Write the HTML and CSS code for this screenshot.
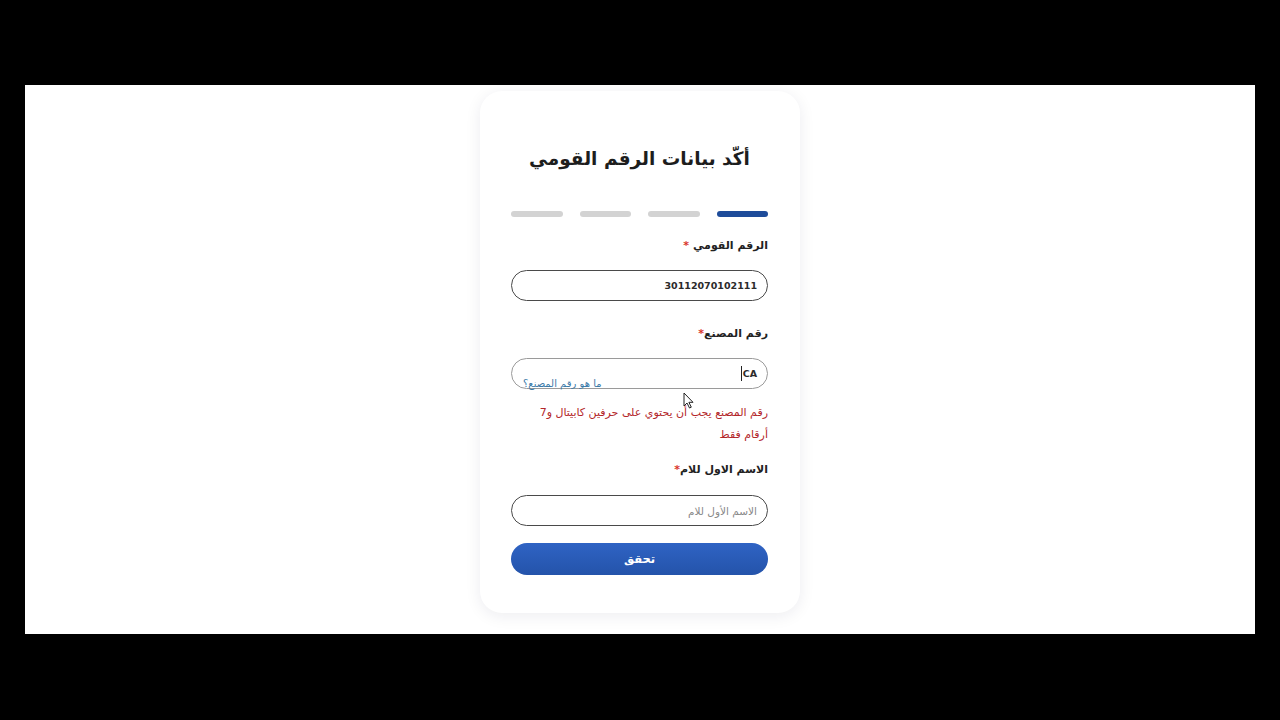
FILE: index.html
```html
<!DOCTYPE html>
<html lang="ar">
<head>
<meta charset="utf-8">
<link rel="stylesheet" href="styles.css">
</head>
<body>
<div class="stage">
  <div class="card" dir="rtl">
    <h1 class="title">أكّد بيانات الرقم القومي</h1>
    <div class="steps">
      <span class="step active"></span>
      <span class="step"></span>
      <span class="step"></span>
      <span class="step"></span>
    </div>

    <label class="label l1">الرقم القومي <span class="req">*</span></label>
    <div class="field f1"><span class="value">30112070102111</span></div>

    <label class="label l2">رقم المصنع<span class="req">*</span></label>
    <div class="field f2">
      <span class="value"><span class="caret"></span>CA</span>
      <span class="hint">ما هو رقم المصنع؟</span>
    </div>
    <p class="error">رقم المصنع يجب أن يحتوي على حرفين كابيتال و7<br>أرقام فقط</p>

    <label class="label l3">الاسم الاول للام<span class="req">*</span></label>
    <div class="field f3"><span class="placeholder">الاسم الأول للام</span></div>

    <button class="submit">تحقق</button>

    <svg class="cursor" width="11" height="17" viewBox="0 0 11 17"><path d="M1 1 L1 14 L4 11 L6.5 16 L8.3 15.2 L5.9 10.3 L10 10.3 Z" fill="#fff" stroke="#222" stroke-width="1" stroke-linejoin="round"/></svg>
  </div>
</div>
</body>
</html>
```

FILE: styles.css
```css
html, body {
  margin: 0;
  padding: 0;
  background: #000;
  height: 720px;
  overflow: hidden;
}
.stage {
  margin: 85px 25px 0;
  height: 549px;
  background: #fff;
  display: flex;
  justify-content: center;
  align-items: flex-start;
  font-family: "DejaVu Sans", "Noto Sans", sans-serif;
}
.card {
  position: relative;
  box-sizing: border-box;
  width: 320px;
  height: 522px;
  margin-top: 6px;
  padding: 0 32px 0 31px;
  background: #fff;
  border-radius: 22px;
  box-shadow: 0 3px 16px rgba(20, 30, 60, 0.08);
  display: flex;
  flex-direction: column;
}
.title {
  margin: 53px 0 0;
  height: 30px;
  line-height: 30px;
  font-size: 18.5px;
  font-weight: bold;
  color: #1d1d1d;
  text-align: center;
}
.steps {
  margin-top: 37px;
  display: flex;
  gap: 17px;
}
.step {
  flex: 1;
  height: 6px;
  border-radius: 3px;
  background: #d3d3d3;
}
.step.active {
  background: #1e4c9a;
}
.label {
  display: block;
  height: 20px;
  line-height: 20px;
  font-size: 11px;
  font-weight: bold;
  color: #222;
}
.req {
  color: #d9342b;
}
.l1 { margin-top: 19px; }
.l2 { margin-top: 23px; }
.l3 { margin-top: 14px; }
.field {
  position: relative;
  box-sizing: border-box;
  height: 31px;
  margin-top: 14px;
  border: 1px solid #4a4a4a;
  border-radius: 16px;
  padding: 0 10px;
  display: flex;
  align-items: center;
  font-size: 9.5px;
}
.f2 {
  border-color: #9a9a9a;
}
.f3 {
  margin-top: 15px;
}
.value {
  font-weight: bold;
  color: #2b2b2b;
  display: flex;
  align-items: center;
  direction: ltr;
}
.caret {
  display: inline-block;
  width: 1px;
  height: 15px;
  background: #222;
  margin-right: 1px;
}
.hint {
  position: absolute;
  left: 11px;
  bottom: -1px;
  font-size: 10px;
  color: #3c7aa8;
}
.placeholder {
  color: #8a8a8a;
  font-size: 10.5px;
}
.error {
  margin: 13px 0 0;
  font-size: 11px;
  line-height: 22px;
  color: #b3262a;
}
.submit {
  margin-top: 17px;
  height: 32px;
  border: none;
  border-radius: 16px;
  background: linear-gradient(#2f63c4, #2453aa);
  color: #fff;
  font-family: "DejaVu Sans", sans-serif;
  font-size: 11.5px;
  font-weight: bold;
  padding: 0;
}
.cursor {
  position: absolute;
  left: 203px;
  top: 301px;
}
```
